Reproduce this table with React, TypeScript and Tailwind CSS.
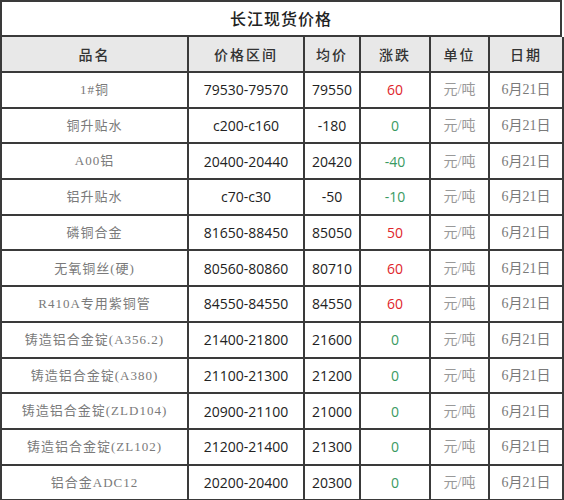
import React from "react";

type Row = {
  name: string;
  range: string;
  avg: string;
  change: number;
};

const rows: Row[] = [
  { name: "1#铜", range: "79530-79570", avg: "79550", change: 60 },
  { name: "铜升贴水", range: "c200-c160", avg: "-180", change: 0 },
  { name: "A00铝", range: "20400-20440", avg: "20420", change: -40 },
  { name: "铝升贴水", range: "c70-c30", avg: "-50", change: -10 },
  { name: "磷铜合金", range: "81650-88450", avg: "85050", change: 50 },
  { name: "无氧铜丝(硬)", range: "80560-80860", avg: "80710", change: 60 },
  { name: "R410A专用紫铜管", range: "84550-84550", avg: "84550", change: 60 },
  { name: "铸造铝合金锭(A356.2)", range: "21400-21800", avg: "21600", change: 0 },
  { name: "铸造铝合金锭(A380)", range: "21100-21300", avg: "21200", change: 0 },
  { name: "铸造铝合金锭(ZLD104)", range: "20900-21100", avg: "21000", change: 0 },
  { name: "铸造铝合金锭(ZL102)", range: "21200-21400", avg: "21300", change: 0 },
  { name: "铝合金ADC12", range: "20200-20400", avg: "20300", change: 0 },
];

const cols = "grid grid-cols-[187px_116px_56px_70px_59px_74px]";
const cell = "flex items-center justify-center border-r-2 border-b-2 border-[#3a3a3a]";
const serif = { fontFamily: '"Liberation Serif", "Noto Sans CJK SC", serif' };
const sans = { fontFamily: '"Open Sans", "Noto Sans CJK SC", sans-serif' };

export default function App() {
  return (
    <div className="w-[564px] h-[500px] overflow-hidden bg-white">
      <div className="w-[562px] border-l-2 border-t-2 border-[#3a3a3a]">
        <div
          className="flex h-[35px] items-center justify-center border-r-2 border-b-2 border-[#3a3a3a] text-[16px] font-medium tracking-[1px] text-[#222]"
          style={sans}
        >
          长江现货价格
        </div>

        <div className={`${cols} h-[36px] bg-[#e8e8e8] text-[14px] font-medium tracking-[2px] text-[#333]`} style={sans}>
          <div className={cell}>品名</div>
          <div className={cell}>价格区间</div>
          <div className={cell}>均价</div>
          <div className={cell}>涨跌</div>
          <div className={cell}>单位</div>
          <div className={cell}>日期</div>
        </div>

        {rows.map((r) => (
          <div key={r.name} className={`${cols} h-[35.7px]`}>
            <div className={`${cell} text-[13px] tracking-[1px] text-[#7a7a7a]`} style={serif}>
              {r.name}
            </div>
            <div className={`${cell} text-[14px] text-[#222]`} style={sans}>
              {r.range}
            </div>
            <div className={`${cell} text-[14px] text-[#222]`} style={sans}>
              {r.avg}
            </div>
            <div
              className={`${cell} text-[14px] ${r.change > 0 ? "text-[#e0262b]" : "text-[#3a9a62]"}`}
              style={sans}
            >
              {r.change}
            </div>
            <div className={`${cell} text-[14px] text-[#999]`} style={serif}>
              元/吨
            </div>
            <div className={`${cell} text-[14px] text-[#7a7a7a]`} style={serif}>
              6月21日
            </div>
          </div>
        ))}
      </div>
    </div>
  );
}
